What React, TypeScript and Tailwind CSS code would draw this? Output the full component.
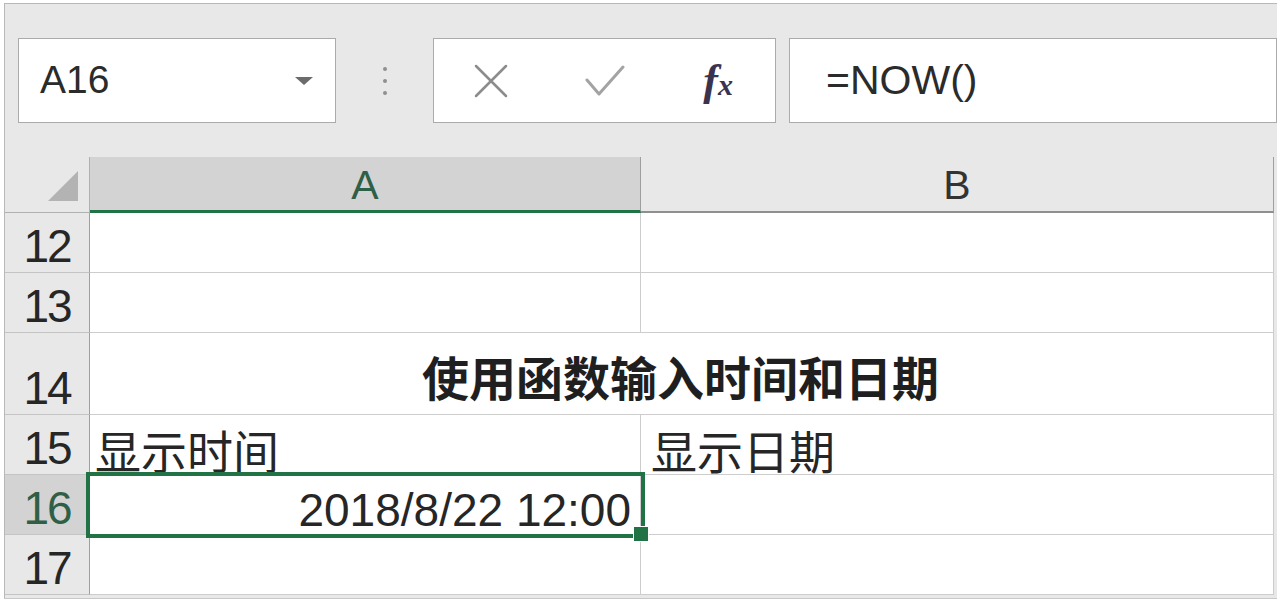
import React from 'react';

const sans = { fontFamily: "'Liberation Sans', 'Noto Sans CJK SC', sans-serif" };
const cjk = { fontFamily: "'Noto Sans CJK SC', 'Liberation Sans', sans-serif" };

function RowHeader({ n, h, selected }: { n: number; h: string; selected?: boolean }) {
  return (
    <div
      className={`${h} flex items-end justify-center border-b border-r border-[#c4c4c4] border-r-[#9f9f9f] ${
        selected ? 'bg-[#d3d3d3] text-[#2f5f46]' : 'bg-[#e8e8e8] text-[#262626]'
      }`}
    >
      <span className="text-[46px] leading-none tracking-[-2px] pb-[3px]" style={sans}>
        {n}
      </span>
    </div>
  );
}

export default function App() {
  return (
    <div className="w-[1282px] h-[606px] bg-white pt-[3px] pl-[4px] overflow-hidden">
      <div className="w-[1273px] h-[596px] bg-[#e8e8e8] border-t border-l border-b border-[#b8b8b8] border-b-[#c8c8c8]">
        {/* formula bar */}
        <div className="flex items-start pt-[34px]">
          <div className="ml-[13px] w-[318px] h-[85px] bg-white border border-[#ababab] flex items-center justify-between pl-[21px] pr-[21px]">
            <span className="text-[39px] text-[#2b2b2b]" style={sans}>A16</span>
            <svg width="20" height="10" viewBox="0 0 20 10">
              <path d="M1 1 L19 1 L10 9 Z" fill="#6b6b6b" />
            </svg>
          </div>
          <div className="w-[97px] h-[85px] flex flex-col items-center justify-center gap-[8px]">
            <span className="w-[4px] h-[4px] rounded-full bg-[#8f8f8f]" />
            <span className="w-[4px] h-[4px] rounded-full bg-[#8f8f8f]" />
            <span className="w-[4px] h-[4px] rounded-full bg-[#8f8f8f]" />
          </div>
          <div className="w-[343px] h-[85px] bg-white border border-[#ababab] flex items-center">
            <div className="w-[114px] flex justify-center">
              <svg width="36" height="34" viewBox="0 0 36 34">
                <path d="M3 2 L33 32 M33 2 L3 32" stroke="#8c8c8c" strokeWidth="2.5" strokeLinecap="round" />
              </svg>
            </div>
            <div className="w-[114px] flex justify-center">
              <svg width="40" height="32" viewBox="0 0 40 32">
                <path d="M2 15 L14 29 L38 2" stroke="#a3a3a3" strokeWidth="3" fill="none" strokeLinecap="round" strokeLinejoin="round" />
              </svg>
            </div>
            <div className="w-[114px] flex justify-center">
              <span className="italic font-bold text-[#3a3350] leading-none" style={{ fontFamily: "'Liberation Serif', serif" }}>
                <span className="text-[44px]">f</span>
                <span className="text-[30px]">x</span>
              </span>
            </div>
          </div>
          <div className="ml-[13px] flex-1 h-[85px] bg-white border border-[#ababab] flex items-center pl-[36px]">
            <span className="text-[41px] text-[#2b2b2b]" style={sans}>=NOW()</span>
          </div>
        </div>

        {/* grid */}
        <div className="relative mt-[34px] grid grid-cols-[85px_551px_633px] grid-rows-[56px_60px_60px_82px_60px_60px_60px]">
          {/* column headers */}
          <div className="flex items-end justify-end border-r border-b border-[#b0b0b0] bg-[#e8e8e8] pr-[10px] pb-[10px]">
            <svg width="32" height="32" viewBox="0 0 32 32">
              <path d="M31 1 L31 31 L1 31 Z" fill="#b3b3b3" />
            </svg>
          </div>
          <div className="flex items-end justify-center bg-[#d3d3d3] border-r border-[#9f9f9f] border-b-[3px] border-b-[#217346]">
            <span className="text-[41px] leading-none pb-[4px] text-[#2f5f46]" style={sans}>A</span>
          </div>
          <div className="flex items-end justify-center bg-[#e8e8e8] border-r border-[#9f9f9f] border-b-2 border-b-[#8f8f8f]">
            <span className="text-[41px] leading-none pb-[5px] text-[#333333]" style={sans}>B</span>
          </div>

          {/* row 12 */}
          <RowHeader n={12} h="h-[60px]" />
          <div className="bg-white border-r border-b border-[#cdcdcd]" />
          <div className="bg-white border-r border-b border-[#cdcdcd]" />

          {/* row 13 */}
          <RowHeader n={13} h="h-[60px]" />
          <div className="bg-white border-r border-b border-[#cdcdcd]" />
          <div className="bg-white border-r border-b border-[#cdcdcd]" />

          {/* row 14 */}
          <RowHeader n={14} h="h-[82px]" />
          <div className="col-span-2 bg-white border-r border-b border-[#cdcdcd] flex items-end justify-center pb-[15px]">
            <span className="text-[47px] font-bold leading-none text-[#1f1f1f] pr-[2px]" style={cjk}>
              使用函数输入时间和日期
            </span>
          </div>

          {/* row 15 */}
          <RowHeader n={15} h="h-[60px]" />
          <div className="bg-white border-r border-b border-[#cdcdcd] flex items-end pl-[5px] pb-[2px]">
            <span className="text-[46px] leading-none text-[#262626]" style={cjk}>显示时间</span>
          </div>
          <div className="bg-white border-r border-b border-[#cdcdcd] flex items-end pl-[10px] pb-[2px]">
            <span className="text-[46px] leading-none text-[#262626]" style={cjk}>显示日期</span>
          </div>

          {/* row 16 */}
          <RowHeader n={16} h="h-[60px]" selected />
          <div className="bg-white border-r border-b border-[#cdcdcd] flex items-end justify-end pr-[9px] pb-[1px]">
            <span className="text-[46px] leading-none text-[#262626]" style={sans}>2018/8/22 12:00</span>
          </div>
          <div className="bg-white border-r border-b border-[#cdcdcd]" />

          {/* row 17 */}
          <RowHeader n={17} h="h-[60px]" />
          <div className="bg-white border-r border-b border-[#cdcdcd]" />
          <div className="bg-white border-r border-b border-[#cdcdcd]" />

          {/* selection */}
          <div className="absolute left-[81px] top-[315px] w-[559px] h-[66px] border-[4px] border-[#217346] pointer-events-none" />
          <div className="absolute left-[628px] top-[369px] w-[16px] h-[16px] bg-[#217346] border border-white" />
        </div>
      </div>
    </div>
  );
}
